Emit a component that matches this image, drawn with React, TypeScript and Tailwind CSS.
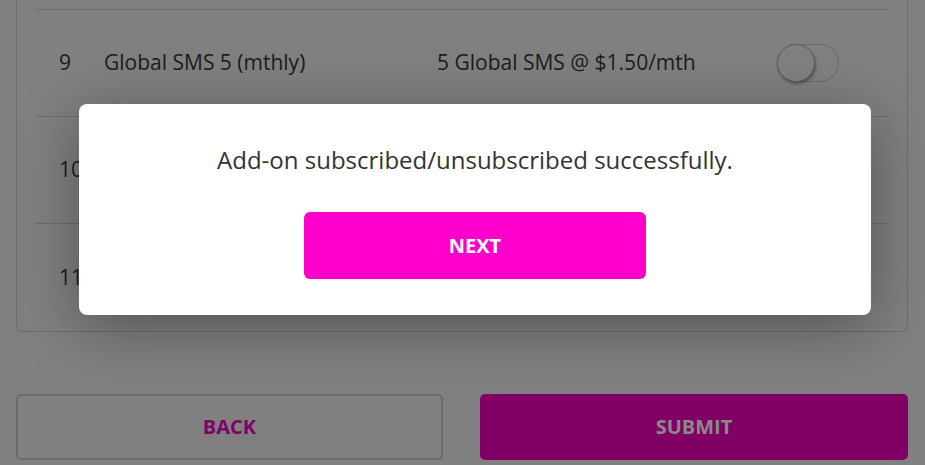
import React from "react";

function Toggle() {
  return (
    <div className="relative h-[38px] w-[62px] rounded-full border border-[#6a6a6a] bg-[#808080]">
      <div className="absolute left-[-1px] top-[-1px] h-[38px] w-[38px] rounded-full border border-[#5f5f5f] bg-[#808080] shadow-[1px_2px_3px_rgba(0,0,0,0.35)]" />
    </div>
  );
}

function Row({ n, name, desc, last }: { n: string; name: string; desc: string; last?: boolean }) {
  return (
    <div className={"flex h-[107px] items-center " + (last ? "" : "border-b border-[#6e6e6e]")}>
      <div className="w-[69px] pl-[24px] text-[21px] text-[#1c1c1c]">{n}</div>
      <div className="w-[333px] text-[21px] text-[#1c1c1c]">{name}</div>
      <div className="w-[340px] text-[21px] text-[#1c1c1c]">{desc}</div>
      <Toggle />
    </div>
  );
}

export default function App() {
  return (
    <div
      className="relative h-[465px] w-[925px] overflow-hidden bg-[#808080]"
      style={{ fontFamily: '"Open Sans", "Noto Sans", sans-serif' }}
    >
      <div className="pl-4 pr-[17px]">
        <div className="rounded-b-[6px] border border-t-0 border-[#6e6e6e] px-[18px]">
          <div className="h-[10px] border-b border-[#6e6e6e]" />
          <Row n="9" name="Global SMS 5 (mthly)" desc="5 Global SMS @ $1.50/mth" />
          <Row n="10" name="Global SMS 10 (mthly)" desc="10 Global SMS @ $2.50/mth" />
          <Row n="11" name="Global SMS 20 (mthly)" desc="20 Global SMS @ $4.50/mth" last />
        </div>
        <div className="mt-[62px] flex gap-[37px]">
          <button className="flex h-[66px] w-[427px] shrink-0 items-center justify-center rounded-[5px] border-2 border-[#6b6b6b] text-[20px] font-bold text-[#80006b]">
            BACK
          </button>
          <button className="flex h-[66px] w-[428px] shrink-0 items-center justify-center rounded-[5px] bg-[#800066] text-[20px] font-bold text-[#8a8a8a]">
            SUBMIT
          </button>
        </div>
      </div>

      <div className="absolute left-[79px] top-[104px] flex h-[211px] w-[792px] flex-col items-center rounded-[8px] bg-white pt-[40px] shadow-[0_12px_60px_rgba(0,0,0,0.35)]">
        <p className="text-[24px] leading-[32px] text-[#333333]">Add-on subscribed/unsubscribed successfully.</p>
        <button className="mt-[36px] flex h-[67px] w-[342px] items-center justify-center rounded-[6px] bg-[#ff00cc] text-[20px] font-bold text-white">
          NEXT
        </button>
      </div>
    </div>
  );
}
